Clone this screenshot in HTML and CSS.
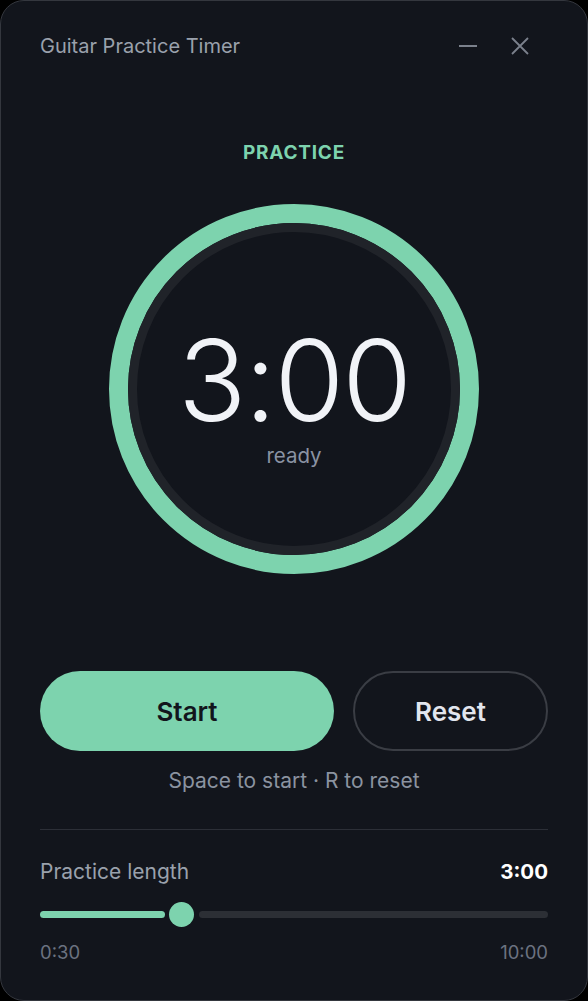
FILE: index.html
```html
<!DOCTYPE html>
<html lang="en">
<head>
<meta charset="utf-8">
<title>Guitar Practice Timer</title>
<link rel="stylesheet" href="styles.css">
</head>
<body>
<div class="window">
  <header class="titlebar">
    <div class="title">Guitar Practice Timer</div>
    <div class="controls">
      <button class="icon-btn" aria-label="Minimize">
        <svg width="18" height="18" viewBox="0 0 18 18"><line x1="0" y1="9" x2="18" y2="9" stroke="#7b818c" stroke-width="2"/></svg>
      </button>
      <button class="icon-btn" aria-label="Close">
        <svg width="18" height="18" viewBox="0 0 18 18"><path d="M1 1 L17 17 M17 1 L1 17" stroke="#7b818c" stroke-width="1.8" fill="none"/></svg>
      </button>
    </div>
  </header>
  <main class="content">
    <div class="mode">PRACTICE</div>
    <div class="ring">
      <div class="ring-inner">
        <div class="time">3:00</div>
        <div class="status">ready</div>
      </div>
    </div>
    <div class="buttons">
      <button class="btn btn-start">Start</button>
      <button class="btn btn-reset">Reset</button>
    </div>
    <div class="hint">Space to start · R to reset</div>
    <div class="divider"></div>
    <div class="length-row">
      <span class="length-label">Practice length</span>
      <span class="length-value">3:00</span>
    </div>
    <div class="slider">
      <div class="slider-fill"></div>
      <div class="slider-thumb"></div>
      <div class="slider-track"></div>
    </div>
    <div class="range-labels">
      <span>0:30</span>
      <span>10:00</span>
    </div>
  </main>
</div>
</body>
</html>
```

FILE: styles.css
```css
* { box-sizing: border-box; }
html, body {
  margin: 0;
  padding: 0;
  background: #000;
}
body {
  font-family: Inter, "Noto Sans", "Liberation Sans", sans-serif;
}
.window {
  width: 588px;
  height: 1001px;
  background: #12151c;
  border: 1px solid #34373e;
  border-radius: 24px;
  overflow: hidden;
}
.titlebar {
  height: 89px;
  display: flex;
  align-items: center;
  justify-content: space-between;
  padding: 0 49px 0 39px;
}
.title {
  font-size: 20px;
  color: #9aa1ac;
  line-height: 24px;
}
.controls {
  display: flex;
  gap: 16px;
}
.icon-btn {
  width: 36px;
  height: 36px;
  padding: 0;
  border: none;
  background: transparent;
  display: flex;
  align-items: center;
  justify-content: center;
}
.content {
  padding: 0 39px;
  display: flex;
  flex-direction: column;
}
.mode {
  margin-top: 51px;
  text-align: center;
  font-size: 19px;
  line-height: 24px;
  font-weight: 700;
  letter-spacing: 0.04em;
  color: #7dd3ae;
}
.ring {
  margin: 39px auto 0;
  width: 370px;
  height: 370px;
  border-radius: 50%;
  border: 19px solid #7dd3ae;
  display: flex;
}
.ring-inner {
  flex: 1;
  border-radius: 50%;
  border: 9px solid #202329;
  display: flex;
  flex-direction: column;
  align-items: center;
  justify-content: center;
  padding-top: 13px;
}
.time {
  font-size: 113px;
  line-height: 113px;
  font-weight: 300;
  color: #f1f3f7;
  letter-spacing: -2px;
}
.status {
  margin-top: 7px;
  font-size: 20.5px;
  line-height: 24px;
  color: #8a93a3;
}
.buttons {
  margin-top: 97px;
  display: flex;
  gap: 19px;
}
.btn {
  height: 80px;
  border-radius: 40px;
  font-family: inherit;
  font-size: 26px;
  font-weight: 600;
}
.btn-start {
  flex: 0 0 294px;
  background: #7dd3ae;
  border: none;
  color: #12151c;
}
.btn-reset {
  flex: 1;
  background: transparent;
  border: 2px solid #3a3d44;
  color: #e2e6ee;
}
.hint {
  margin-top: 18px;
  text-align: center;
  font-size: 21px;
  line-height: 24px;
  color: #8b93a0;
}
.divider {
  margin-top: 36px;
  height: 1px;
  background: #2c2f37;
}
.length-row {
  margin-top: 30px;
  display: flex;
  justify-content: space-between;
  align-items: center;
  line-height: 24px;
}
.length-label {
  font-size: 21px;
  color: #9aa1ac;
}
.length-value {
  font-size: 20.5px;
  font-weight: 700;
  color: #ffffff;
}
.slider {
  margin-top: 18px;
  height: 25px;
  display: flex;
  align-items: center;
}
.slider-fill {
  width: 125px;
  height: 7px;
  border-radius: 4px;
  background: #7dd3ae;
}
.slider-thumb {
  width: 25px;
  height: 25px;
  border-radius: 50%;
  background: #7dd3ae;
  margin: 0 5px 0 4px;
}
.slider-track {
  flex: 1;
  height: 7px;
  border-radius: 4px;
  background: #2c2f35;
}
.range-labels {
  margin-top: 14px;
  display: flex;
  justify-content: space-between;
  font-size: 18.5px;
  line-height: 22px;
  color: #6b7280;
}
```
